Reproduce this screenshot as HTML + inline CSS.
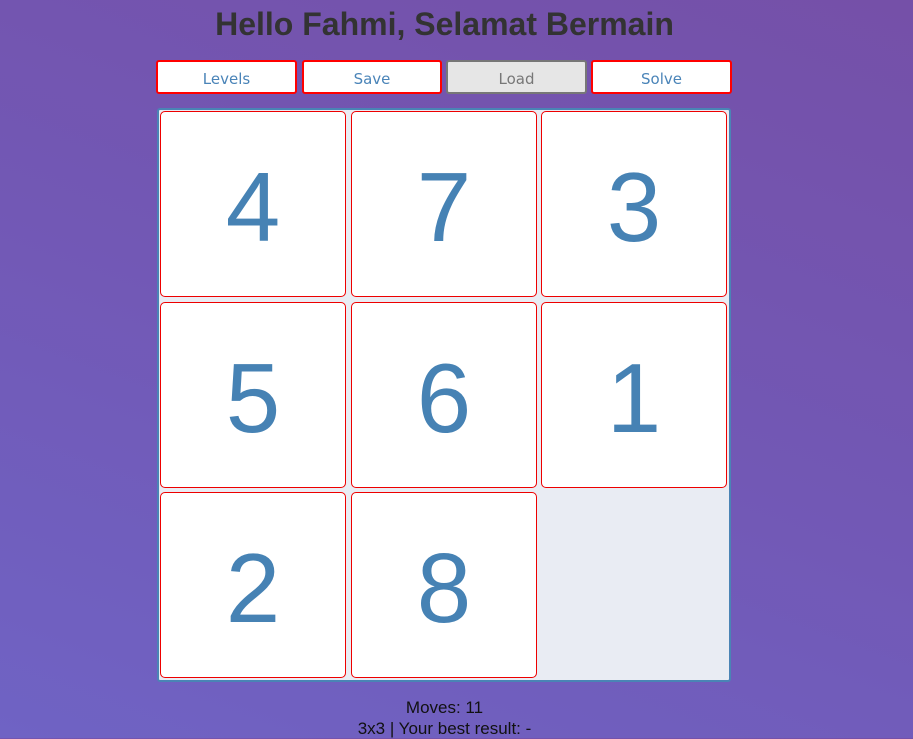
<!DOCTYPE html>
<html><head><style>
html,body{margin:0;padding:0}
body{width:913px;height:738px;overflow:hidden;position:relative;font-family:"Liberation Sans",Arial,sans-serif;background:linear-gradient(200deg,#7550a8 0%,#7258b5 50%,#6f63c4 100%);}
h1{position:absolute;left:0;width:889px;top:4px;margin:0;text-align:center;font-size:32px;font-weight:bold;color:#333;line-height:40px}
.btn{position:absolute;top:60px;height:34px;box-sizing:border-box;border:2px solid #f00;border-radius:3px;background:#fff;color:#4a84b8;font-size:15px;text-align:center;line-height:34px;font-family:"Segoe UI","DejaVu Sans","Liberation Sans",sans-serif}
.load{background:#e6e6e6;border-color:#777;color:#777}
.board{position:absolute;left:157px;top:108px;width:574px;height:574px;box-sizing:border-box;border:2px solid #4a84b5;border-radius:3px;background:#e9ecf3}
.t{position:absolute;width:186px;height:186px;box-sizing:border-box;border:1px solid #e00;border-radius:5px;background:#fff;color:#4682b4;font-size:98px;text-align:center;line-height:190px}
.info{position:absolute;left:0;width:889px;text-align:center;font-size:17px;color:#111}
</style></head><body>
<h1>Hello Fahmi, Selamat Bermain</h1>
<div class="btn" style="left:156px;width:141px">Levels</div>
<div class="btn" style="left:302px;width:140px">Save</div>
<div class="btn load" style="left:446px;width:141px">Load</div>
<div class="btn" style="left:591px;width:141px">Solve</div>
<div class="board"></div>
<div class="t" style="left:160px;top:111px">4</div>
<div class="t" style="left:351px;top:111px">7</div>
<div class="t" style="left:541px;top:111px">3</div>
<div class="t" style="left:160px;top:302px">5</div>
<div class="t" style="left:351px;top:302px">6</div>
<div class="t" style="left:541px;top:302px">1</div>
<div class="t" style="left:160px;top:492px">2</div>
<div class="t" style="left:351px;top:492px">8</div>
<div class="info" style="top:698px">Moves: 11</div>
<div class="info" style="top:719px">3x3 | Your best result: -</div>
</body></html>
